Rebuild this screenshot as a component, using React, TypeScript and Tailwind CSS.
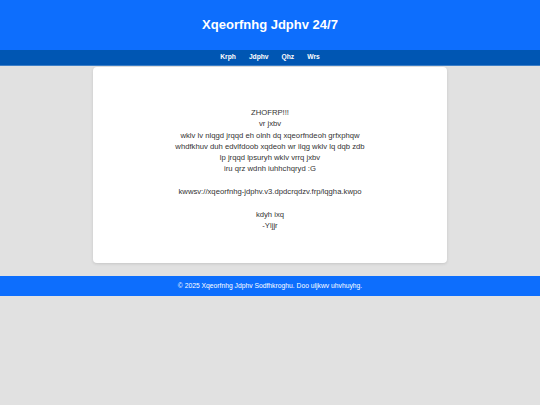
export default function App() {
  const lines = [
    'ZHOFRP!!!',
    'vr jxbv',
    'wklv lv nlqgd jrqqd eh olnh dq xqeorfndeoh grfxphqw',
    'whdfkhuv duh edvlfdoob xqdeoh wr ilqg wklv lq dqb zdb',
    'lp jrqqd lpsuryh wklv vrrq jxbv',
    'iru qrz wdnh iuhhchqryd :G',
    '',
    'kwwsv://xqeorfnhg-jdphv.v3.dpdcrqdzv.frp/lqgha.kwpo',
    '',
    'kdyh ixq',
    '-Yljjr',
  ];

  return (
    <div className="min-h-[405px] bg-[#e1e1e1] font-['Liberation_Sans',Arial,sans-serif]">
      {/* Header */}
      <header className="bg-[#0d6efd] h-[50px] flex items-center justify-center">
        <h1 className="text-white text-[13px] font-bold">Xqeorfnhg Jdphv 24/7</h1>
      </header>

      {/* Nav */}
      <nav className="bg-[#0056b3] h-[16px] border-b border-[#3d7fc7] flex items-center justify-center gap-[13px]">
        {['Krph', 'Jdphv', 'Qhz', 'Wrs'].map(item => (
          <span key={item} className="text-white text-[6.7px] font-bold">{item}</span>
        ))}
      </nav>

      {/* Content card */}
      <main className="w-[354px] mx-auto mt-px bg-white rounded-[4px] shadow-[0_1px_3px_rgba(0,0,0,0.12)] pt-[40px] pb-[32px] text-center text-[#333] text-[7.7px] leading-[11.3px]">
        {lines.map((line, i) => (
          <div key={i} className="min-h-[11.3px]">{line}</div>
        ))}
      </main>

      {/* Footer */}
      <footer className="bg-[#0d6efd] h-[20px] mt-[13px] flex items-center justify-center">
        <span className="text-white text-[6.75px]">© 2025 Xqeorfnhg Jdphv Sodfhkroghu. Doo uljkwv uhvhuyhg.</span>
      </footer>
    </div>
  );
}
